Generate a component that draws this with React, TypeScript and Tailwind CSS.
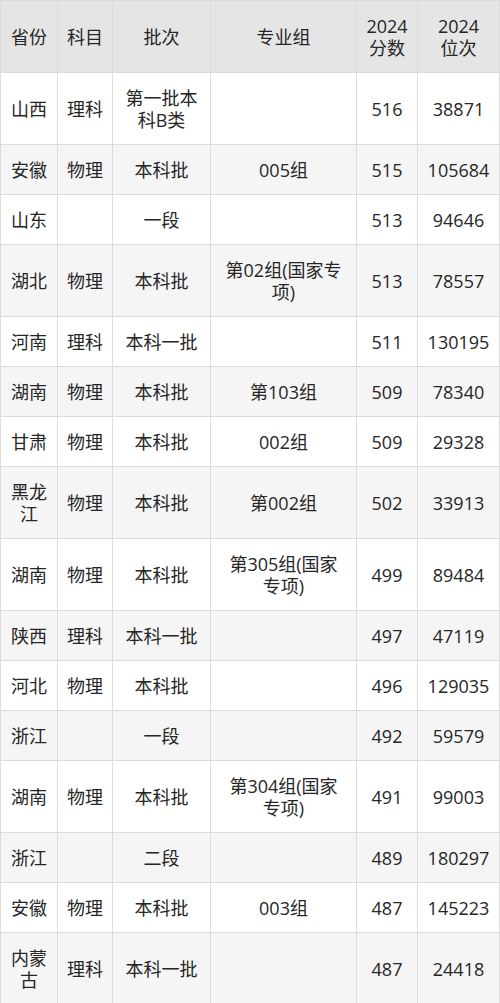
import React from 'react';

type Row = [string, string, string, string, string, string];

const rows: Row[] = [
  ['山西', '理科', '第一批本科B类', '', '516', '38871'],
  ['安徽', '物理', '本科批', '005组', '515', '105684'],
  ['山东', '', '一段', '', '513', '94646'],
  ['湖北', '物理', '本科批', '第02组(国家专项)', '513', '78557'],
  ['河南', '理科', '本科一批', '', '511', '130195'],
  ['湖南', '物理', '本科批', '第103组', '509', '78340'],
  ['甘肃', '物理', '本科批', '002组', '509', '29328'],
  ['黑龙江', '物理', '本科批', '第002组', '502', '33913'],
  ['湖南', '物理', '本科批', '第305组(国家专项)', '499', '89484'],
  ['陕西', '理科', '本科一批', '', '497', '47119'],
  ['河北', '物理', '本科批', '', '496', '129035'],
  ['浙江', '', '一段', '', '492', '59579'],
  ['湖南', '物理', '本科批', '第304组(国家专项)', '491', '99003'],
  ['浙江', '', '二段', '', '489', '180297'],
  ['安徽', '物理', '本科批', '003组', '487', '145223'],
  ['内蒙古', '理科', '本科一批', '', '487', '24418'],
];

const widths = ['w-[57px]', 'w-[55px]', 'w-[98px]', 'w-[146px]', 'w-[61px]', 'w-[82px]'];
const pads = ['px-[9px]', 'px-[9px]', 'px-[10px]', 'px-[12px]', 'px-[8px]', 'px-[8px]'];

const headers: React.ReactNode[] = [
  '省份',
  '科目',
  '批次',
  '专业组',
  <>
    2024
    <br />
    分数
  </>,
  <>
    2024
    <br />
    位次
  </>,
];

const cell = 'border border-[#dcdcdc] py-[13.5px] text-center align-middle leading-[22px]';

export default function App() {
  return (
    <div className="w-[500px] bg-white">
      <table
        className="w-[500px] table-fixed border-collapse text-[18px] text-[#262626]"
        style={{ fontFamily: '"Open Sans", "Noto Sans CJK SC", sans-serif' }}
      >
        <colgroup>
          {widths.map((w, i) => (
            <col key={i} className={w} />
          ))}
        </colgroup>
        <thead>
          <tr className="bg-[#e5e5e5]">
            {headers.map((h, i) => (
              <th key={i} className={`${cell} ${pads[i]} font-normal`}>
                {h}
              </th>
            ))}
          </tr>
        </thead>
        <tbody>
          {rows.map((r, i) => (
            <tr key={i} className={i % 2 === 0 ? 'bg-white' : 'bg-[#f5f5f5]'}>
              {r.map((c, j) => (
                <td key={j} className={`${cell} ${pads[j]}`}>
                  {c}
                </td>
              ))}
            </tr>
          ))}
        </tbody>
      </table>
    </div>
  );
}
